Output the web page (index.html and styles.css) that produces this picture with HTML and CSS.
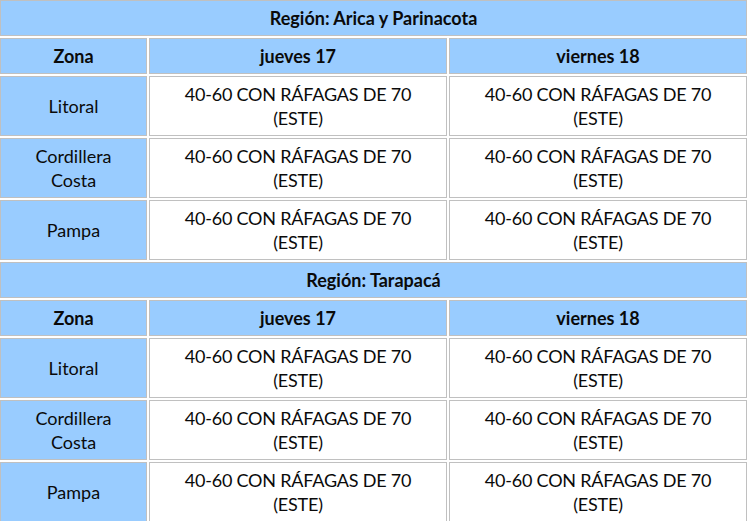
FILE: index.html
```html
<!DOCTYPE html>
<html lang="es">
<head>
<meta charset="utf-8">
<title>Pronóstico de viento</title>
<link rel="stylesheet" href="styles.css">
</head>
<body>
<table class="forecast">
  <colgroup>
    <col class="c-zone">
    <col class="c-day">
    <col class="c-day">
  </colgroup>
  <tbody>
    <tr class="region"><th colspan="3">Región: Arica y Parinacota</th></tr>
    <tr class="head"><th>Zona</th><th>jueves 17</th><th>viernes 18</th></tr>
    <tr class="data"><td class="zone">Litoral</td><td>40-60 CON RÁFAGAS DE 70 (ESTE)</td><td>40-60 CON RÁFAGAS DE 70 (ESTE)</td></tr>
    <tr class="data"><td class="zone">Cordillera Costa</td><td>40-60 CON RÁFAGAS DE 70 (ESTE)</td><td>40-60 CON RÁFAGAS DE 70 (ESTE)</td></tr>
    <tr class="data"><td class="zone">Pampa</td><td>40-60 CON RÁFAGAS DE 70 (ESTE)</td><td>40-60 CON RÁFAGAS DE 70 (ESTE)</td></tr>
    <tr class="region"><th colspan="3">Región: Tarapacá</th></tr>
    <tr class="head"><th>Zona</th><th>jueves 17</th><th>viernes 18</th></tr>
    <tr class="data"><td class="zone">Litoral</td><td>40-60 CON RÁFAGAS DE 70 (ESTE)</td><td>40-60 CON RÁFAGAS DE 70 (ESTE)</td></tr>
    <tr class="data"><td class="zone">Cordillera Costa</td><td>40-60 CON RÁFAGAS DE 70 (ESTE)</td><td>40-60 CON RÁFAGAS DE 70 (ESTE)</td></tr>
    <tr class="data"><td class="zone">Pampa</td><td>40-60 CON RÁFAGAS DE 70 (ESTE)</td><td>40-60 CON RÁFAGAS DE 70 (ESTE)</td></tr>
  </tbody>
</table>
</body>
</html>
```
FILE: styles.css
```css
html, body {
  margin: 0;
  padding: 0;
  background: #ffffff;
}
body {
  font-family: Lato, "Open Sans", "Liberation Sans", sans-serif;
  color: #0a0a0a;
  overflow: hidden;
}
.forecast {
  border-collapse: separate;
  border-spacing: 2px;
  margin: -2px 0 0 -2px;
  width: 751px;
  table-layout: fixed;
}
.c-zone { width: 147px; }
.c-day { width: 298px; }
.forecast th,
.forecast td {
  border: 1px solid #c0c0c0;
  text-align: center;
  vertical-align: middle;
  font-size: 18px;
  line-height: 24px;
  padding: 0 14px;
  box-sizing: border-box;
}
.forecast th {
  background: #99ccff;
  font-weight: bold;
  height: 36px;
}
.forecast td {
  background: #ffffff;
  height: 60px;
  font-weight: normal;
  letter-spacing: -0.2px;
}
.forecast td.zone {
  background: #99ccff;
  padding: 0 20px;
  letter-spacing: 0;
}
```
